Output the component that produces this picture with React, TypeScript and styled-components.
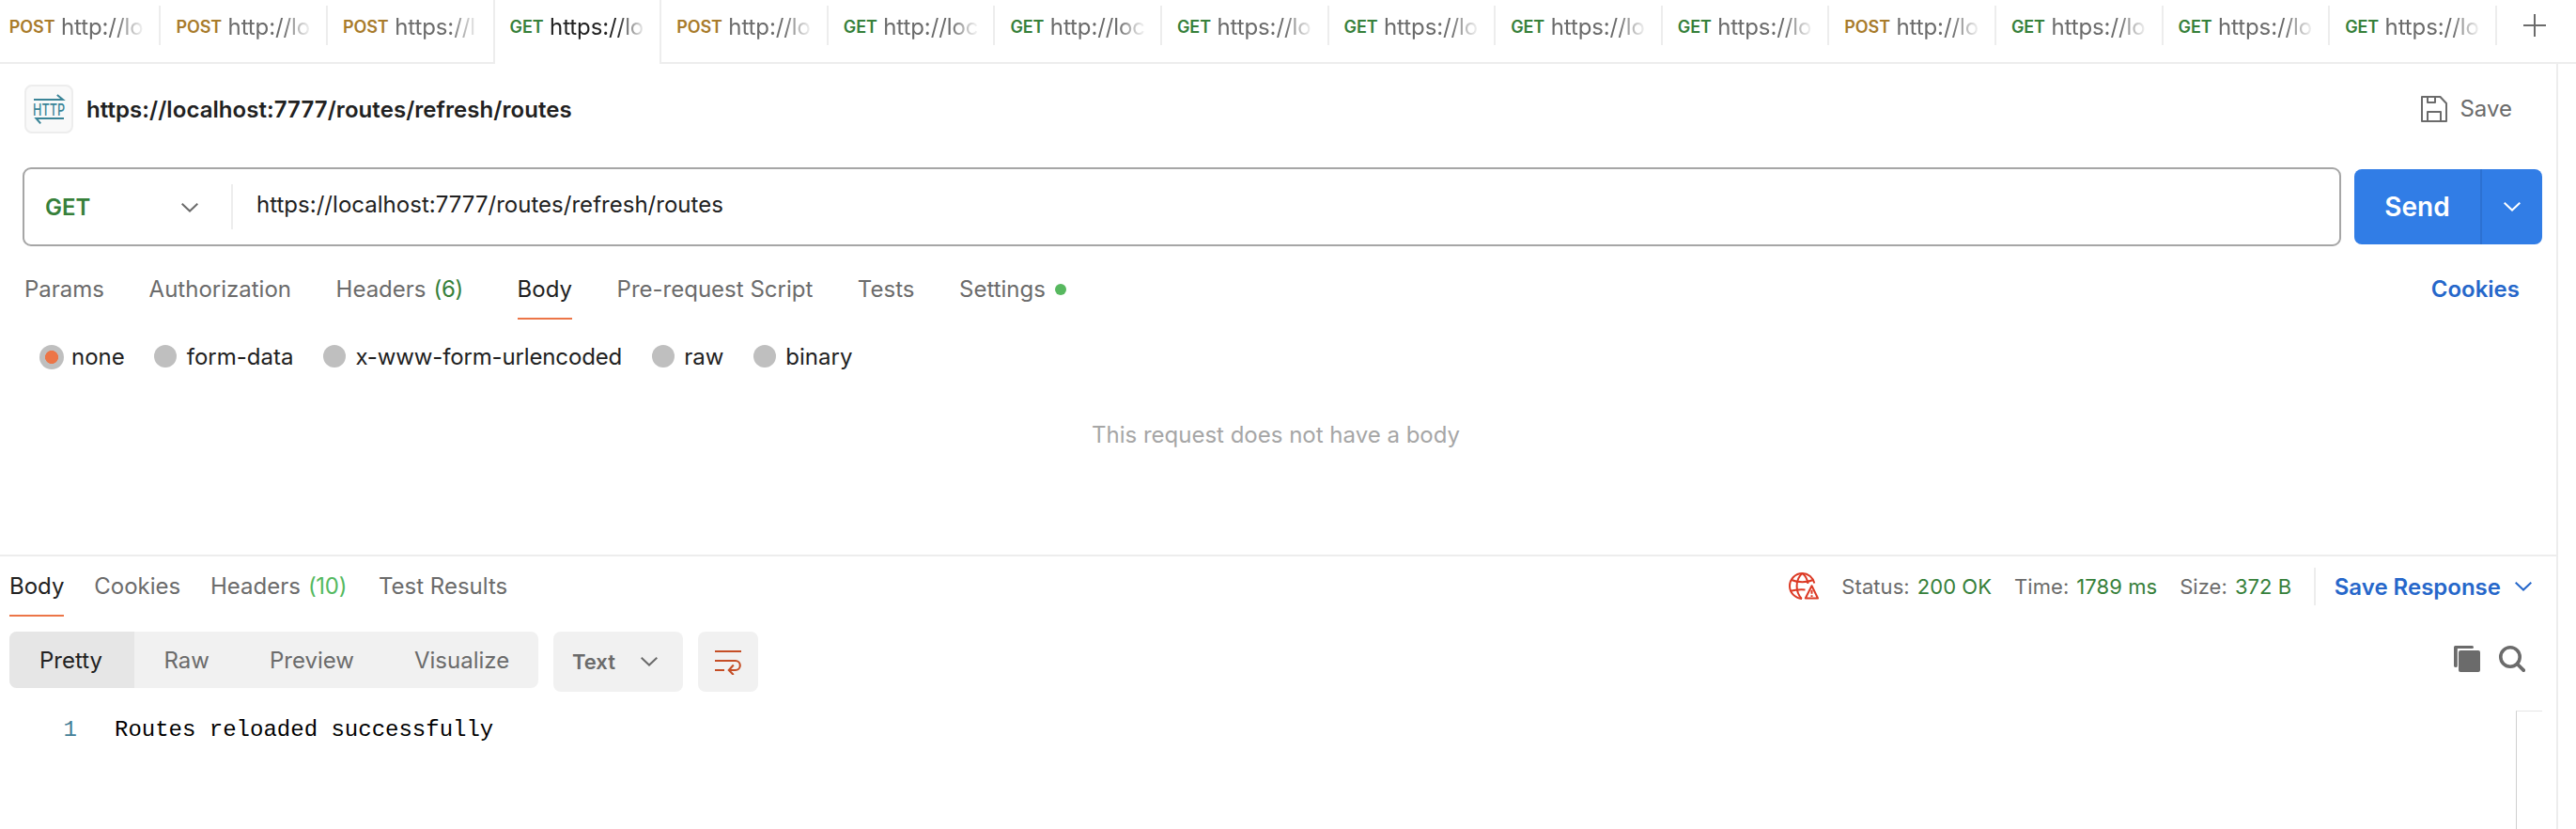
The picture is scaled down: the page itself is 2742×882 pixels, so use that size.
import React from 'react';
import styled, { createGlobalStyle, css } from 'styled-components';

const c = {
  text: '#212121',
  muted: '#6b6b6b',
  faint: '#a6a6a6',
  line: '#ededed',
  get: '#36803a',
  post: '#a87b2b',
  orange: '#ec7547',
  blue: '#317de6',
  link: '#2667ca',
  panel: '#f1f1f1',
};

const GlobalStyle = createGlobalStyle`
  * { box-sizing: border-box; }
  body {
    margin: 0;
    background: #fff;
    color: ${c.text};
    font: 400 24px/33px Inter, "Liberation Sans", sans-serif;
    white-space: nowrap;
  }
  svg { display: block; flex: none; }
`;

const Page = styled.div`
  display: flex;
  flex-direction: column;
  width: 2742px;
  height: 882px;
  overflow: hidden;
`;

/* ---------- request tabs ---------- */

const TabStrip = styled.nav`
  display: flex;
  height: 68px;
  flex: none;
  overflow: hidden;
  box-shadow: inset 0 -2px ${c.line};
`;

const TabList = styled.div`
  display: flex;
  width: 2663.9px;
  margin-left: -6.2px;
  flex: none;
`;

const Tab = styled.div<{ $active?: boolean; $beforeActive?: boolean }>`
  display: flex;
  flex: 1 1 0;
  min-width: 0;
  height: 42px;
  margin-top: 6px;
  padding: 3px 17px 0 16px;
  align-items: center;
  border-right: 2px solid ${c.line};
  color: ${c.muted};
  ${p => p.$beforeActive && css`border-right-color: transparent;`}
  ${p => p.$active && css`
    height: 68px;
    margin: 0 0 0 -2px;
    padding: 0 17px 11px 16px;
    flex-grow: 1;
    flex-basis: 2px;
    border-left: 2px solid ${c.line};
    background: #fff;
    color: ${c.text};
  `}
`;

const TabMethod = styled.span<{ $post: boolean }>`
  margin-right: 6.5px;
  font-size: 18px;
  font-weight: 600;
  letter-spacing: -0.1px;
  color: ${p => (p.$post ? c.post : c.get)};
`;

const TabUrl = styled.span`
  flex: 1;
  min-width: 0;
  overflow: hidden;
  letter-spacing: -0.1px;
  mask-image: linear-gradient(to left, rgba(0, 0, 0, 0.08), rgba(0, 0, 0, 0.5) 14px, #000 28px);
`;

const AddTab = styled.div`
  display: flex;
  flex: 1;
  height: 54px;
  padding-left: 28px;
  align-items: center;
`;

/* ---------- request pane ---------- */

const Pane = styled.main`
  display: flex;
  flex: 1;
  flex-direction: column;
  width: 2723px;
  border-right: 2px solid ${c.line};
`;

const RequestArea = styled.section`
  display: flex;
  flex-direction: column;
  height: 522px;
  flex: none;
`;

const TitleBar = styled.header`
  display: flex;
  height: 52px;
  margin-top: 22px;
  padding: 0 47px 0 26px;
  align-items: center;
`;

const HttpBadge = styled.div`
  width: 52px;
  height: 52px;
  margin-right: 14px;
  border: 2px solid ${c.line};
  border-radius: 8px;
  background: #f9f9f9;
`;

const Title = styled.h1`
  flex: 1;
  margin: 0;
  padding-top: 1px;
  font-size: 24px;
  font-weight: 600;
  letter-spacing: 0.06px;
`;

const SaveButton = styled.div`
  display: flex;
  gap: 13px;
  align-items: center;
  color: ${c.muted};
  line-height: 32px;
`;

const UrlRow = styled.div`
  display: flex;
  margin-top: 36px;
  padding: 0 15px 0 24px;
  gap: 14px;
  align-items: center;
`;

const UrlBox = styled.div`
  display: flex;
  flex: 1;
  height: 84px;
  align-items: center;
  border: 2px solid ${c.faint};
  border-radius: 9px;
`;

const MethodSelect = styled.div`
  display: flex;
  width: 222px;
  height: 48px;
  padding: 1px 35px 0 22px;
  align-items: center;
  justify-content: space-between;
  border-right: 2px solid ${c.line};
  color: ${c.get};
  font-weight: 600;
`;

const UrlText = styled.span`
  padding: 0 24px 5px 25px;
  letter-spacing: 0.02px;
`;

const SendGroup = styled.div`
  display: flex;
  width: 200px;
  height: 80px;
  overflow: hidden;
  border-radius: 8px;
  background: ${c.blue};
  color: #fff;
`;

const SendMain = styled.div`
  display: flex;
  width: 136px;
  align-items: center;
  justify-content: center;
  border-right: 2px solid #2c71d2;
  font-size: 28px;
  font-weight: 600;
`;

const SendMore = styled.div`
  display: flex;
  flex: 1;
  align-items: center;
  justify-content: center;
`;

const SectionTabs = styled.div`
  display: flex;
  height: 66px;
  margin-top: 12px;
  padding: 0 39px 0 26px;
  gap: 47.6px;
`;

const SectionTab = styled.div<{ $active?: boolean }>`
  display: flex;
  height: 66px;
  padding-top: 17px;
  gap: 8px;
  color: ${p => (p.$active ? c.text : c.muted)};
  box-shadow: ${p => (p.$active ? `inset 0 -2px ${c.orange}` : 'none')};
`;

const Count = styled.span<{ $light?: boolean }>`
  margin-right: ${p => (p.$light ? 2 : 10)}px;
  color: ${p => (p.$light ? '#54b95f' : c.get)};
  letter-spacing: -0.3px;
`;

const Dot = styled.i`
  width: 12px;
  height: 12px;
  margin: 11px 0 0 2px;
  border-radius: 50%;
  background: #57b85f;
`;

const CookiesLink = styled.div`
  margin-left: auto;
  padding-top: 17px;
  color: ${c.link};
  font-weight: 600;
`;

const BodyTypes = styled.div`
  display: flex;
  height: 32px;
  margin-top: 23px;
  padding-left: 42px;
  gap: 31.5px;
`;

const BodyType = styled.label<{ $tight?: boolean }>`
  display: flex;
  gap: 10.5px;
  letter-spacing: ${p => (p.$tight ? '-0.14px' : 'normal')};
`;

const Radio = styled.i<{ $on?: boolean }>`
  width: ${p => (p.$on ? 26 : 24)}px;
  height: ${p => (p.$on ? 26 : 24)}px;
  margin: ${p => (p.$on ? '4px -2.5px 0 0' : '4px 0 0')};
  border-radius: 50%;
  background: ${p => (p.$on ? `radial-gradient(circle, ${c.orange} 6.7px, #bfbfbf 7.3px)` : '#bfbfbf')};
`;

const EmptyNote = styled.p`
  margin: 51px 0 0;
  width: 2716px;
  text-align: center;
  color: ${c.faint};
`;

/* ---------- response pane ---------- */

const ResponseArea = styled.section`
  display: flex;
  flex: 1;
  flex-direction: column;
  border-top: 2px solid ${c.line};
`;

const ResponseHead = styled.div`
  display: flex;
  height: 64px;
  padding: 0 26px 0 10px;
`;

const ResponseTabs = styled.div`
  display: flex;
  flex: 1;
  gap: 31.8px;
`;

const ResponseTab = styled.div<{ $active?: boolean }>`
  display: flex;
  height: 64px;
  padding-top: 15px;
  gap: 8px;
  color: ${p => (p.$active ? c.text : c.muted)};
  box-shadow: ${p => (p.$active ? `inset 0 -2px ${c.orange}` : 'none')};
`;

const Meta = styled.div`
  display: flex;
  height: 40px;
  margin-top: 12px;
  align-items: center;
  color: ${c.muted};
  font-size: 22px;
  letter-spacing: 0.06px;
`;

const MetaItem = styled.span`
  margin-left: 24px;
`;

const MetaValue = styled.span`
  margin-left: 8px;
  color: ${c.get};
`;

const SaveResponse = styled.div`
  display: flex;
  height: 40px;
  margin-left: 23.5px;
  padding-left: 20px;
  gap: 15px;
  align-items: center;
  border-left: 2px solid ${c.line};
  color: ${c.link};
  font-size: 24px;
  font-weight: 600;
  letter-spacing: 0;
`;

const Toolbar = styled.div`
  display: flex;
  height: 64px;
  margin-top: 16px;
  padding: 0 33px 0 10px;
  gap: 16px;
`;

const Segments = styled.div`
  display: flex;
  height: 60px;
  width: 563px;
  overflow: hidden;
  border-radius: 8px;
  background: ${c.panel};
`;

const Segment = styled.div<{ $active?: boolean }>`
  display: flex;
  padding: ${p => (p.$active ? '0 34px 0 32px' : '0 32.5px 0 31.5px')};
  align-items: center;
  background: ${p => (p.$active ? '#e6e6e6' : 'transparent')};
  color: ${p => (p.$active ? c.text : c.muted)};
`;

const FormatSelect = styled.div`
  display: flex;
  width: 138px;
  height: 64px;
  padding: 0 27px 0 20px;
  align-items: center;
  justify-content: space-between;
  border-radius: 8px;
  background: ${c.panel};
  color: ${c.muted};
  font-size: 22px;
  font-weight: 600;
`;

const WrapButton = styled.div`
  width: 64px;
  height: 64px;
  padding: 18px;
  border-radius: 8px;
  background: ${c.panel};
`;

const ToolIcons = styled.div`
  display: flex;
  margin: 15px 0 0 auto;
  gap: 20px;
`;

const Editor = styled.div`
  display: flex;
  flex: 1;
  margin: 20px 15px 0 0;
  color: #000;
  font-family: "Liberation Mono", monospace;
  font-size: 24px;
`;

const LineNumber = styled.span`
  width: 82px;
  padding-top: 4px;
  text-align: right;
  color: #437f98;
`;

const CodeLine = styled.span`
  flex: 1;
  padding: 4px 0 0 40px;
`;

const Ruler = styled.div`
  width: 28px;
  border-top: 1px solid #e6e6e6;
  border-left: 1px solid #cfcfcf;
`;

/* ---------- icons ---------- */

const Chevron = ({ color }: { color: string }) => (
  <svg width="18" height="10" viewBox="0 0 18 10" fill="none" stroke={color} strokeWidth="2">
    <path d="M0.7 0.8 9 8.6 17.3 0.8" />
  </svg>
);

const HttpIcon = () => (
  <svg width="48" height="48" viewBox="0 0 48 48" fill="none" stroke="#3a8497" strokeWidth="2">
    <path d="M8 14H39L32.8 8.9M40 34H10.5L15.2 39.4" />
    <text x="7" y="30.6" textLength="34" lengthAdjust="spacingAndGlyphs" fill="#3a8497" stroke="none" fontSize="17.5" fontWeight="500" fontFamily="Inter, sans-serif">HTTP</text>
  </svg>
);

const PlusIcon = () => (
  <svg width="24" height="24" viewBox="0 0 24 24" fill="none" stroke={c.muted} strokeWidth="2">
    <path d="M12 0V24M0 12H24" />
  </svg>
);

const SaveIcon = () => (
  <svg width="28" height="28" viewBox="0 0 28 28" fill="none" stroke={c.muted} strokeWidth="2" strokeLinejoin="round">
    <path d="M1 1H20.5L27 8V27H1ZM7 1V7H15V1M7 27V17H21V27" />
  </svg>
);

const GlobeWarningIcon = () => (
  <svg width="32" height="30" viewBox="0 0 32 30" fill="none" stroke="#dc3a25" strokeWidth="2">
    <path d="M27.3 11.5C26 5.4 20.7 1 14.5 1C7 1 1 7 1 14.5C1 21.5 6.5 27.4 14 28" />
    <path d="M13.8 28C10.4 24.5 8.6 20 8.6 14.5C8.6 8.8 10.8 4 14.5 1C18 3.8 20 7.5 20.4 12" />
    <path d="M3 8C9 11 20 11 26 8M2 19.8C7 18.3 12 18 17.5 18.4" />
    <path d="M24.5 14.2 31 27.5H17.8Z" strokeLinejoin="round" />
    <path d="M24.5 18.8V22.8M24.5 24.2V26" />
  </svg>
);

const WrapIcon = () => (
  <svg width="28" height="28" viewBox="0 0 28 28" fill="none" stroke="#c54e26" strokeWidth="2.1">
    <path d="M0 3H28M0 13H21.8A5 5 0 0 1 21.8 23H15M0 23H10M19.8 17.5 14.8 23 19.8 28" />
  </svg>
);

const CopyIcon = () => (
  <svg width="28" height="28" viewBox="0 0 28 28" fill={c.muted}>
    <path d="M1.5 0H19.5Q21 0 21 1.5T19.5 3H3.8V21.5Q3.8 23 2 23T0 21.5V1.5Q0 0 1.5 0Z" />
    <rect x="5" y="5" width="23" height="23" rx="2" />
  </svg>
);

const SearchIcon = () => (
  <svg width="28" height="28" viewBox="0 0 28 28" fill="none" stroke={c.muted}>
    <circle cx="12" cy="12" r="10.2" strokeWidth="3.6" />
    <path d="M19.5 19.5 26.2 26.2" strokeWidth="3.8" strokeLinecap="round" />
  </svg>
);

/* ---------- data ---------- */

const tabs: [string, string][] = [
  ['POST', 'http://lo'],
  ['POST', 'http://lo'],
  ['POST', 'https://l'],
  ['GET', 'https://lo'],
  ['POST', 'http://lo'],
  ['GET', 'http://loc'],
  ['GET', 'http://loc'],
  ['GET', 'https://lo'],
  ['GET', 'https://lo'],
  ['GET', 'https://lo'],
  ['GET', 'https://lo'],
  ['POST', 'http://lo'],
  ['GET', 'https://lo'],
  ['GET', 'https://lo'],
  ['GET', 'https://lo'],
];
const activeTab = 3;
const url = 'https://localhost:7777/routes/refresh/routes';
const bodyTypes = ['none', 'form-data', 'x-www-form-urlencoded', 'raw', 'binary'];
const views = ['Pretty', 'Raw', 'Preview', 'Visualize'];
const stats = [['Status:', '200 OK'], ['Time:', '1789 ms'], ['Size:', '372 B']];

export default function App() {
  return (
    <Page>
      <GlobalStyle />
      <TabStrip>
        <TabList>
          {tabs.map(([method, label], i) => (
            <Tab key={i} $active={i === activeTab} $beforeActive={i === activeTab - 1}>
              <TabMethod $post={method === 'POST'}>{method}</TabMethod>
              <TabUrl>{label}</TabUrl>
            </Tab>
          ))}
        </TabList>
        <AddTab><PlusIcon /></AddTab>
      </TabStrip>
      <Pane>
        <RequestArea>
          <TitleBar>
            <HttpBadge><HttpIcon /></HttpBadge>
            <Title>{url}</Title>
            <SaveButton><SaveIcon />Save</SaveButton>
          </TitleBar>
          <UrlRow>
            <UrlBox>
              <MethodSelect>GET<Chevron color={c.muted} /></MethodSelect>
              <UrlText>{url}</UrlText>
            </UrlBox>
            <SendGroup>
              <SendMain>Send</SendMain>
              <SendMore><Chevron color="#fff" /></SendMore>
            </SendGroup>
          </UrlRow>
          <SectionTabs>
            <SectionTab>Params</SectionTab>
            <SectionTab>Authorization</SectionTab>
            <SectionTab>Headers<Count>(6)</Count></SectionTab>
            <SectionTab $active>Body</SectionTab>
            <SectionTab>Pre-request Script</SectionTab>
            <SectionTab>Tests</SectionTab>
            <SectionTab>Settings<Dot /></SectionTab>
            <CookiesLink>Cookies</CookiesLink>
          </SectionTabs>
          <BodyTypes>
            {bodyTypes.map((name, i) => (
              <BodyType key={name} $tight={i === 2}><Radio $on={i === 0} />{name}</BodyType>
            ))}
          </BodyTypes>
          <EmptyNote>This request does not have a body</EmptyNote>
        </RequestArea>
        <ResponseArea>
          <ResponseHead>
            <ResponseTabs>
              <ResponseTab $active>Body</ResponseTab>
              <ResponseTab>Cookies</ResponseTab>
              <ResponseTab>Headers<Count $light>(10)</Count></ResponseTab>
              <ResponseTab>Test Results</ResponseTab>
            </ResponseTabs>
            <Meta>
              <GlobeWarningIcon />
              {stats.map(([label, value]) => (
                <MetaItem key={label}>{label}<MetaValue>{value}</MetaValue></MetaItem>
              ))}
              <SaveResponse>Save Response<Chevron color={c.link} /></SaveResponse>
            </Meta>
          </ResponseHead>
          <Toolbar>
            <Segments>
              {views.map((name, i) => <Segment key={name} $active={i === 0}>{name}</Segment>)}
            </Segments>
            <FormatSelect>Text<Chevron color={c.muted} /></FormatSelect>
            <WrapButton><WrapIcon /></WrapButton>
            <ToolIcons><CopyIcon /><SearchIcon /></ToolIcons>
          </Toolbar>
          <Editor>
            <LineNumber>1</LineNumber>
            <CodeLine>Routes reloaded successfully</CodeLine>
            <Ruler />
          </Editor>
        </ResponseArea>
      </Pane>
    </Page>
  );
}
